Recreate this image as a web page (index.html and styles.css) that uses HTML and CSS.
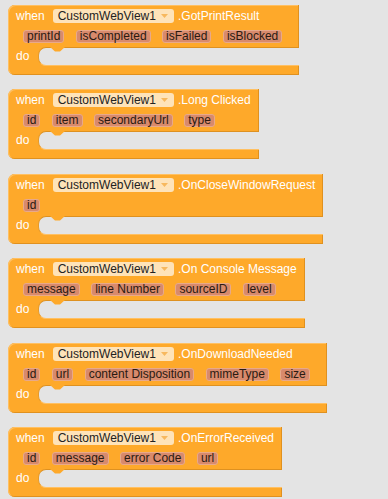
FILE: index.html
```html
<!DOCTYPE html>
<html lang="en">
<head>
    <meta charset="UTF-8">
    <title>CustomWebView events</title>
    <link rel="stylesheet" href="styles.css">
</head>
<body>
    <div class="workspace">

        <div class="block">
            <div class="head">
                <div class="title">
                    <span class="kw">when</span>
                    <span class="field">CustomWebView1<svg class="arrow" width="7" height="4" viewBox="0 0 7 4"><path d="M0 0 L7 0 L3.5 4 Z"/></svg></span>
                    <span class="event">.GotPrintResult</span>
                </div>
                <div class="params">
                    <span class="param">printId</span>
                    <span class="param">isCompleted</span>
                    <span class="param">isFailed</span>
                    <span class="param">isBlocked</span>
                </div>
            </div>
            <div class="body">
                <span class="kw do">do</span>
                <div class="slot"><svg class="notch" width="15" height="5" viewBox="0 0 15 5"><path d="M0 0 L5 4.5 L10 4.5 L15 0 Z"/></svg></div>
            </div>
            <div class="foot"></div>
        </div>

        <div class="block">
            <div class="head">
                <div class="title">
                    <span class="kw">when</span>
                    <span class="field">CustomWebView1<svg class="arrow" width="7" height="4" viewBox="0 0 7 4"><path d="M0 0 L7 0 L3.5 4 Z"/></svg></span>
                    <span class="event">.Long Clicked</span>
                </div>
                <div class="params">
                    <span class="param">id</span>
                    <span class="param">item</span>
                    <span class="param">secondaryUrl</span>
                    <span class="param">type</span>
                </div>
            </div>
            <div class="body">
                <span class="kw do">do</span>
                <div class="slot"><svg class="notch" width="15" height="5" viewBox="0 0 15 5"><path d="M0 0 L5 4.5 L10 4.5 L15 0 Z"/></svg></div>
            </div>
            <div class="foot"></div>
        </div>

        <div class="block">
            <div class="head">
                <div class="title">
                    <span class="kw">when</span>
                    <span class="field">CustomWebView1<svg class="arrow" width="7" height="4" viewBox="0 0 7 4"><path d="M0 0 L7 0 L3.5 4 Z"/></svg></span>
                    <span class="event">.OnCloseWindowRequest</span>
                </div>
                <div class="params">
                    <span class="param">id</span>
                </div>
            </div>
            <div class="body">
                <span class="kw do">do</span>
                <div class="slot"><svg class="notch" width="15" height="5" viewBox="0 0 15 5"><path d="M0 0 L5 4.5 L10 4.5 L15 0 Z"/></svg></div>
            </div>
            <div class="foot"></div>
        </div>

        <div class="block">
            <div class="head">
                <div class="title">
                    <span class="kw">when</span>
                    <span class="field">CustomWebView1<svg class="arrow" width="7" height="4" viewBox="0 0 7 4"><path d="M0 0 L7 0 L3.5 4 Z"/></svg></span>
                    <span class="event">.On Console Message</span>
                </div>
                <div class="params">
                    <span class="param">message</span>
                    <span class="param">line Number</span>
                    <span class="param">sourceID</span>
                    <span class="param">level</span>
                </div>
            </div>
            <div class="body">
                <span class="kw do">do</span>
                <div class="slot"><svg class="notch" width="15" height="5" viewBox="0 0 15 5"><path d="M0 0 L5 4.5 L10 4.5 L15 0 Z"/></svg></div>
            </div>
            <div class="foot"></div>
        </div>

        <div class="block">
            <div class="head">
                <div class="title">
                    <span class="kw">when</span>
                    <span class="field">CustomWebView1<svg class="arrow" width="7" height="4" viewBox="0 0 7 4"><path d="M0 0 L7 0 L3.5 4 Z"/></svg></span>
                    <span class="event">.OnDownloadNeeded</span>
                </div>
                <div class="params">
                    <span class="param">id</span>
                    <span class="param">url</span>
                    <span class="param">content Disposition</span>
                    <span class="param">mimeType</span>
                    <span class="param">size</span>
                </div>
            </div>
            <div class="body">
                <span class="kw do">do</span>
                <div class="slot"><svg class="notch" width="15" height="5" viewBox="0 0 15 5"><path d="M0 0 L5 4.5 L10 4.5 L15 0 Z"/></svg></div>
            </div>
            <div class="foot"></div>
        </div>

        <div class="block">
            <div class="head">
                <div class="title">
                    <span class="kw">when</span>
                    <span class="field">CustomWebView1<svg class="arrow" width="7" height="4" viewBox="0 0 7 4"><path d="M0 0 L7 0 L3.5 4 Z"/></svg></span>
                    <span class="event">.OnErrorReceived</span>
                </div>
                <div class="params">
                    <span class="param">id</span>
                    <span class="param">message</span>
                    <span class="param">error Code</span>
                    <span class="param">url</span>
                </div>
            </div>
            <div class="body">
                <span class="kw do">do</span>
                <div class="slot"><svg class="notch" width="15" height="5" viewBox="0 0 15 5"><path d="M0 0 L5 4.5 L10 4.5 L15 0 Z"/></svg></div>
            </div>
            <div class="foot"></div>
        </div>

    </div>
</body>
</html>
```

FILE: styles.css
```css
body {
    margin: 0;
    padding: 5px 8px;
    background: #e4e4e4;
    font-family: "Liberation Sans", Arial, sans-serif;
    font-size: 12px;
}

.workspace {
    display: flex;
    flex-direction: column;
    align-items: flex-start;
    gap: 14.4px;
}

/* event block */
.block {
    display: flex;
    flex-direction: column;
    height: 70px;
}

.head {
    background: #fea92a;
    border-radius: 7px 0 0 0;
    padding: 4px 8px 4px 8px;
    box-shadow: inset -1px 0 0 #e0911f, inset 1px 1px 0 #ffc062;
}

.title {
    display: flex;
    align-items: center;
    height: 14px;
    color: #fff;
}

.kw {
    color: #fff;
    line-height: 14px;
}

.field {
    display: flex;
    align-items: center;
    height: 14px;
    margin-left: 8px;
    padding: 0 6px 0 5px;
    background: #fee3b9;
    border-radius: 3px;
    color: #222;
    line-height: 14px;
}

.arrow {
    margin-left: 5px;
    fill: #f7b85e;
}

.event {
    margin-left: 4px;
    line-height: 14px;
}

.params {
    display: flex;
    gap: 11.5px;
    height: 13px;
    margin-top: 7px;
    padding: 0 9px 0 7px;
}

.param {
    box-sizing: border-box;
    height: 13px;
    padding: 0 3px;
    border: 1px solid #e8a98a;
    border-radius: 3px;
    background: #d88a6c;
    color: #2a1a12;
    line-height: 11px;
    white-space: nowrap;
}

.body {
    display: flex;
    height: 19px;
    background: #fea92a;
}

.do {
    width: 30px;
    box-sizing: border-box;
    padding-left: 8px;
    line-height: 19px;
    box-shadow: inset 1px 0 0 #ffc062;
}

.slot {
    position: relative;
    flex: 1;
    background: #e4e4e4;
    border-radius: 8px 0 0 8px;
    border-top: 1px solid #de9120;
    border-left: 1px solid #e69a2a;
    border-bottom: 1px solid #ffc062;
}

.notch {
    position: absolute;
    left: 11px;
    top: -1px;
    fill: #fea92a;
}

.foot {
    height: 9px;
    background: #fea92a;
    border-radius: 0 0 0 7px;
    box-shadow: inset -1px -1px 0 #e0911f, inset 1px 0 0 #ffc062;
}
```
